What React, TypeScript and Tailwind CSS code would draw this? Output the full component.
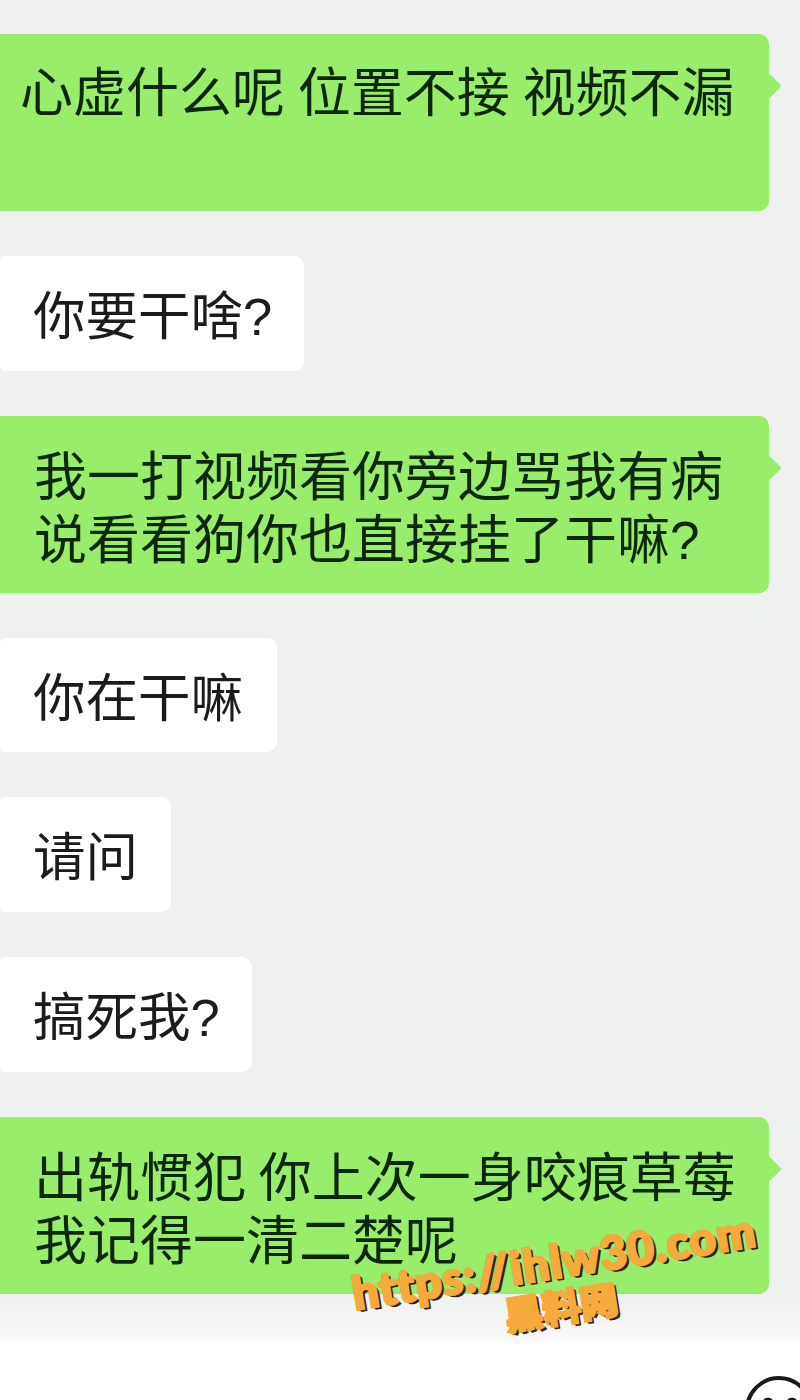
const cjk = "font-['Liberation_Sans','Noto_Sans_CJK_SC',sans-serif]";

const Sent = ({ lines, first }: { lines: string[]; first?: boolean }) => (
  <div className="relative mr-[31px] h-[177px] rounded-r-[10px] bg-[#98ed6a]">
    <span className="absolute right-[-9px] top-[43px] h-[18px] w-[18px] rotate-45 rounded-[2px] bg-[#98ed6a]" />
    <div className={`relative text-[#0b2709] ${first ? "pl-[20px] pt-[28px]" : "pl-[34px] pt-[30px]"} text-[53px] leading-[63px] whitespace-pre [word-spacing:-2px]`}>
      {lines.map((line) => (
        <div key={line}>{line}</div>
      ))}
    </div>
  </div>
);

const Received = ({ text, width }: { text: string; width: string }) => (
  <div className={`flex h-[114.67px] items-center rounded-r-[10px] rounded-l-[6px] bg-white pl-[33px] pt-[8px] text-[52.5px] text-[#1c1c1c] ${width}`}>
    {text}
  </div>
);

const App = () => {
  return (
    <div className={`relative flex h-[1400px] w-[800px] flex-col overflow-hidden bg-[#eff0f0] pt-[34px] ${cjk}`}>
      <div className="flex flex-col gap-[45px]">
        <Sent first lines={["心虚什么呢 位置不接 视频不漏"]} />
        <Received text="你要干啥?" width="w-[304px]" />
        <Sent lines={["我一打视频看你旁边骂我有病", "说看看狗你也直接挂了干嘛?"]} />
        <Received text="你在干嘛" width="w-[277px]" />
        <Received text="请问" width="w-[171px]" />
        <Received text="搞死我?" width="w-[252px]" />
        <Sent lines={["出轨惯犯 你上次一身咬痕草莓", "我记得一清二楚呢"]} />
      </div>

      {/* fade into the input bar */}
      <div className="flex-1 bg-gradient-to-b from-[#eef0f2] via-[#f8f8f9] via-40% to-white to-50%" />

      {/* watermark */}
      <div className="absolute left-[342px] top-[1235px] w-[430px] -rotate-[9deg] text-center font-['Lato','Noto_Sans_CJK_SC',sans-serif] font-black text-[#f6aa3c] [-webkit-text-stroke:2.5px_#f6aa3c] [text-shadow:1px_1px_0_#2b2413,2px_2px_0_#2b2413,3px_3px_0_#2b2413]">
        <div className="text-[46px] leading-[52px] tracking-[1px] whitespace-nowrap">https://ihlw30.com</div>
        <div className="text-[38px] leading-[40px]">黑料网</div>
      </div>

      {/* emoji button */}
      <svg className="absolute left-[740px] top-[1370px]" width="80" height="80" viewBox="0 0 80 80" fill="none">
        <circle cx="39" cy="40" r="32" stroke="#1a1a1a" strokeWidth="4" />
        <circle cx="28" cy="33" r="5.5" fill="#1a1a1a" />
        <circle cx="52" cy="33" r="5.5" fill="#1a1a1a" />
      </svg>
    </div>
  );
};

export default App;
